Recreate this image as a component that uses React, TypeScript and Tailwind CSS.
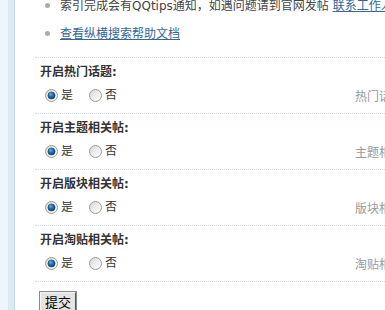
import React from "react";

const font = { fontFamily: '"DejaVu Sans", "Noto Sans CJK SC", sans-serif' };

function Radio({ checked }: { checked: boolean }) {
  return (
    <svg width="13" height="13" viewBox="0 0 13 13" className="shrink-0">
      <defs>
        <linearGradient id={checked ? "rg1" : "rg0"} x1="0" y1="0" x2="1" y2="1">
          <stop offset="0" stopColor="#d9d9d9" />
          <stop offset="1" stopColor="#ffffff" />
        </linearGradient>
        <radialGradient id="dot" cx="0.4" cy="0.35" r="0.7">
          <stop offset="0" stopColor="#6fb0e0" />
          <stop offset="0.5" stopColor="#1f6aa8" />
          <stop offset="1" stopColor="#0d3f6e" />
        </radialGradient>
      </defs>
      <circle cx="6.5" cy="6.5" r="6" fill={checked ? "url(#rg1)" : "url(#rg0)"} stroke="#9a9a9a" strokeWidth="1" />
      {checked && <circle cx="6.5" cy="6.5" r="3.6" fill="url(#dot)" stroke="#0e3a63" strokeWidth="0.5" />}
    </svg>
  );
}

function Block({ label, desc }: { label: string; desc: string }) {
  return (
    <div className="border-t border-dotted border-[#cfdde6] pl-[5px] pt-[7px] pb-[11px]">
      <div className="font-bold text-[12px] leading-[15px] text-[#333]">{label}</div>
      <div className="mt-[9px] flex items-center h-[13px] overflow-hidden">
        <div className="w-[315px] shrink-0 flex items-center">
          <label className="ml-[5px] flex items-center gap-[3px] text-[12px] leading-[13px] text-[#333]">
            <Radio checked />
            <span>是</span>
          </label>
          <label className="ml-[16px] flex items-center gap-[3px] text-[12px] leading-[13px] text-[#333]">
            <Radio checked={false} />
            <span>否</span>
          </label>
        </div>
        <div className="shrink-0 whitespace-nowrap text-[12px] leading-[13px] text-[#999] mt-[3px]">{desc}</div>
      </div>
    </div>
  );
}

export default function App() {
  return (
    <div className="w-[385px] h-[310px] overflow-hidden flex bg-white" style={font}>
      <div className="w-[8px] shrink-0 bg-[#eef6fc]" />
      <div className="w-[6px] shrink-0 bg-[#dbeaf7]" />
      <div className="w-[1px] shrink-0 bg-[#c3d8ea]" />
      <div className="flex-1 min-w-0 pl-[20px] overflow-hidden">
        <ul className="-mt-[1px] mb-[15px]">
          <li className="flex items-center h-[15px] whitespace-nowrap text-[12px] leading-[15px] text-[#444]">
            <span className="ml-[10px] w-[5px] h-[5px] rounded-full bg-[#aaa] -translate-y-[1px] shrink-0" />
            <span className="ml-[10px]">
              索引完成会有QQtips通知，如遇问题请到官网发帖{" "}
              <a className="text-[#336699] underline">联系工作人员</a>
            </span>
          </li>
          <li className="mt-[13px] flex items-center h-[15px] whitespace-nowrap text-[12px] leading-[15px]">
            <span className="ml-[10px] w-[5px] h-[5px] rounded-full bg-[#aaa] -translate-y-[1px] shrink-0" />
            <a className="ml-[10px] text-[#336699] underline">查看纵横搜索帮助文档</a>
          </li>
        </ul>
        <Block label="开启热门话题:" desc="热门话题功能说明" />
        <Block label="开启主题相关帖:" desc="主题相关帖功能说明" />
        <Block label="开启版块相关帖:" desc="版块相关帖功能说明" />
        <Block label="开启淘贴相关帖:" desc="淘贴相关帖功能说明" />
        <div className="border-t border-dotted border-[#cfdde6] pl-[5px] pt-[8px]">
          <button className="h-[22px] px-[4px] bg-[#e4e4e4] border border-t-[#f5f5f5] border-l-[#f5f5f5] border-r-[#555] border-b-[#555] text-[13px] leading-[18px] text-black shadow-[0_0_0_1px_#888]" style={font}>
            提交
          </button>
        </div>
      </div>
    </div>
  );
}
